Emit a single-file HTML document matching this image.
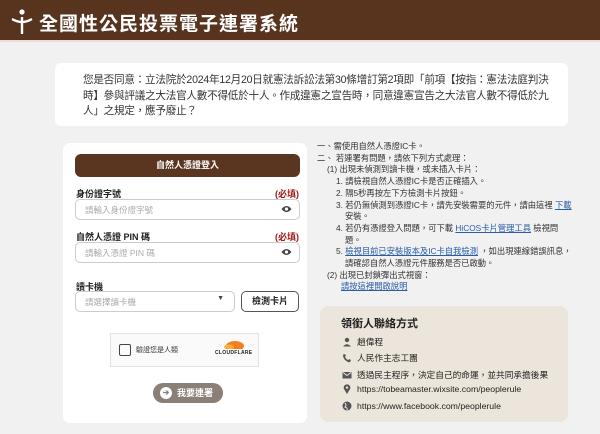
<!DOCTYPE html>
<html><head><meta charset="utf-8"><style>
*{margin:0;padding:0;box-sizing:border-box}
body{width:600px;height:434px;overflow:hidden;background:#f1f1f1;font-family:"Liberation Sans","Noto Sans CJK TC",sans-serif;color:#222;position:relative}
.hdr{position:absolute;left:0;top:0;width:600px;height:42px;background:#58341f;border-bottom:2px solid #e9dfd6}
.hdr .t{position:absolute;left:39px;top:9px;font-size:19px;font-weight:bold;color:#fff;letter-spacing:1px}
.q{position:absolute;left:55px;top:63px;width:513px;height:63px;background:#fff;border-radius:6px;padding:10px 8px 0 28px;font-size:10.6px;line-height:15.5px;color:#333;letter-spacing:-0.25px}
.card{position:absolute;left:63px;top:143px;width:244px;height:280px;background:#fff;border-radius:7px}
.btn{position:absolute;left:12px;top:11px;width:225px;height:23px;background:#5a3520;border-radius:6px;color:#fff;font-size:9px;font-weight:bold;text-align:center;line-height:23px}
.lbl{position:absolute;left:13px;font-size:9px;font-weight:bold}
.req{position:absolute;right:8px;font-size:9px;font-weight:bold;color:#a01818}
.inp{position:absolute;left:12px;width:225px;height:21px;border:1px solid #ccc;border-radius:5px;font-size:8.5px;color:#aaa;padding:4px 0 0 9px}
.eye{position:absolute;right:7px;top:5px}
.right{position:absolute;left:317px;top:141px;font-size:8.3px;line-height:11.7px;color:#333}
.right a{color:#2a5ca8;text-decoration:underline}
.ct{position:absolute;left:320px;top:306px;width:248px;height:116px;background:#ece5dc;border-radius:8px}
.ct .h{position:absolute;left:21px;top:9px;font-size:11px;font-weight:bold}
.row{position:absolute;left:22px;font-size:8.7px;display:flex;align-items:center;gap:5px}
.ic{width:10px;height:10px;display:inline-block}
</style></head><body>
<div class="hdr">
<svg style="position:absolute;left:10px;top:9px" width="24" height="26" viewBox="0 0 24 26"><circle cx="12" cy="3" r="2.6" fill="#fff"/><path d="M2 10 Q12 16 22 10" stroke="#fff" stroke-width="2.2" fill="none"/><path d="M12 8 V25" stroke="#fff" stroke-width="2.4"/></svg>
<div class="t">全國性公民投票電子連署系統</div></div>
<div class="q">您是否同意：立法院於2024年12月20日就憲法訴訟法第30條增訂第2項即「前項【按指：憲法法庭判決時】參與評議之大法官人數不得低於十人。作成違憲之宣告時，同意違憲宣告之大法官人數不得低於九人」之規定，應予廢止？</div>
<div class="card">
<div class="btn">自然人憑證登入</div>
<div class="lbl" style="top:44px">身份證字號</div><div class="req" style="top:44px">(必填)</div>
<div class="inp" style="top:56px">請輸入身份證字號<svg class="eye" width="11" height="8" viewBox="0 0 11 8"><path d="M0.5 4 Q5.5 -2 10.5 4 Q5.5 10 0.5 4Z" fill="#444"/><circle cx="5.5" cy="4" r="1.6" fill="#fff"/></svg></div>
<div class="lbl" style="top:87px">自然人憑證 PIN 碼</div><div class="req" style="top:87px">(必填)</div>
<div class="inp" style="top:99px">請輸入憑證 PIN 碼<svg class="eye" width="11" height="8" viewBox="0 0 11 8"><path d="M0.5 4 Q5.5 -2 10.5 4 Q5.5 10 0.5 4Z" fill="#444"/><circle cx="5.5" cy="4" r="1.6" fill="#fff"/></svg></div>
<div class="lbl" style="top:137px">讀卡機</div>
<div class="inp" style="top:148px;width:160px">請選擇讀卡機<span style="position:absolute;right:10px;top:3px;color:#444;font-size:7px">▼</span></div>
<div style="position:absolute;left:178px;top:148px;width:58px;height:21px;border:1px solid #555;border-radius:5px;font-size:9px;font-weight:bold;text-align:center;line-height:19px">檢測卡片</div>
<div style="position:absolute;left:47px;top:190px;width:149px;height:34px;background:#fafafa;border:1px solid #e2e2e2">
<div style="position:absolute;left:8px;top:10px;width:12px;height:12px;border:1.5px solid #444;border-radius:2px"></div>
<div style="position:absolute;left:25px;top:11px;font-size:7px;color:#333">驗證您是人類</div>
<svg style="position:absolute;left:110px;top:5px" width="24" height="10"><ellipse cx="14" cy="7" rx="9" ry="5" fill="#f38020"/><ellipse cx="8" cy="8" rx="5" ry="2.5" fill="#faad3f"/></svg>
<div style="position:absolute;left:104px;top:16px;font-size:5px;font-weight:bold;letter-spacing:.3px">CLOUDFLARE</div>
</div>
<div style="position:absolute;left:90px;top:240px;width:70px;height:20px;background:#8b8078;border-radius:10px;color:#fff;font-size:9px;font-weight:bold;line-height:20px;padding-left:24px"><span style="position:absolute;left:7px;top:4px;width:12px;height:12px;background:#fff;border-radius:50%;color:#8b8078;font-size:8px;line-height:12px;text-align:center">➔</span>我要連署</div>
</div>
<div class="right">
<div>一、需使用自然人憑證IC卡。</div>
<div>二、 若連署有問題，請依下列方式處理：</div>
<div style="padding-left:10px">(1) 出現未偵測到讀卡機，或未插入卡片：</div>
<div style="padding-left:19px">1. 請檢視自然人憑證IC卡是否正確插入。</div>
<div style="padding-left:19px">2. 隔5秒再按左下方檢測卡片按鈕。</div>
<div style="padding-left:19px">3. 若仍無偵測到憑證IC卡，請先安裝需要的元件，請由這裡 <a>下載</a></div>
<div style="padding-left:28px">安裝。</div>
<div style="padding-left:19px">4. 若仍有憑證登入問題，可下載 <a>HiCOS卡片管理工具</a> 檢視問</div>
<div style="padding-left:28px">題。</div>
<div style="padding-left:19px">5. <a>檢視目前已安裝版本及IC卡自我檢測</a> ，如出現連線錯誤訊息，</div>
<div style="padding-left:28px">請確認自然人憑證元件服務是否已啟動。</div>
<div style="padding-left:10px">(2) 出現已封鎖彈出式視窗：</div>
<div style="padding-left:24px"><a>請按這裡開啟說明</a></div>
</div>
<div class="ct">
<div class="h">領銜人聯絡方式</div>
<div class="row" style="top:29px"><svg class="ic" viewBox="0 0 10 10"><circle cx="5" cy="3" r="2.2" fill="#555"/><path d="M1 9.5 Q5 5 9 9.5Z" fill="#555"/></svg>趙偉程</div>
<div class="row" style="top:45px"><svg class="ic" viewBox="0 0 10 10"><path d="M2 1 L4 2 L3 4 Q4 6 6 7 L8 6 L9 8 L7 9.5 Q1 7 1 2Z" fill="#555"/></svg>人民作主志工團</div>
<div class="row" style="top:62px"><svg class="ic" viewBox="0 0 10 10"><rect x="0.5" y="2" width="9" height="6.5" fill="#555"/><path d="M1 2.5 L5 5.5 L9 2.5" stroke="#ece5dc" fill="none"/></svg>透過民主程序，決定自己的命運，並共同承擔後果</div>
<div class="row" style="top:78px"><svg class="ic" viewBox="0 0 10 10"><path d="M5 10 L2 5 A3.3 3.3 0 1 1 8 5Z" fill="#555"/><circle cx="5" cy="3.6" r="1.2" fill="#ece5dc"/></svg>https://tobeamaster.wixsite.com/peoplerule</div>
<div class="row" style="top:95px"><svg class="ic" viewBox="0 0 10 10"><circle cx="5" cy="5" r="4.5" fill="#555"/><path d="M3 2 Q5 4 3 6 Q6 7 5 9" stroke="#ece5dc" fill="none"/></svg>https://www.facebook.com/peoplerule</div>
</div>
</body></html>
